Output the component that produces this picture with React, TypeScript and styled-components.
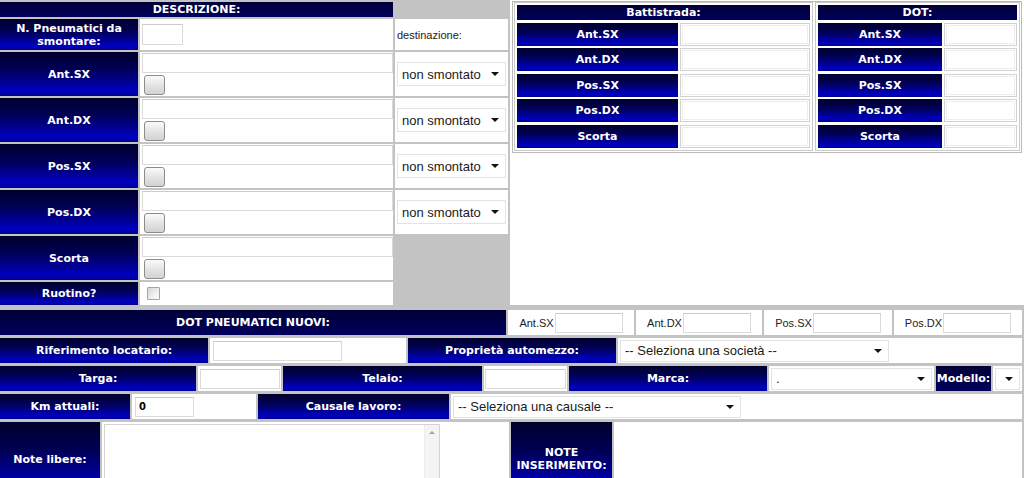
import styled, { createGlobalStyle } from 'styled-components';

const GlobalStyle = createGlobalStyle`
  html, body {
    margin: 0;
    padding: 0;
    background: #c3c3c3;
  }
  body {
    font-family: "DejaVu Sans", Verdana, sans-serif;
    overflow: hidden;
  }
`;

const Page = styled.div`
  width: 1024px;
  height: 478px;
  overflow: hidden;
  display: flex;
  flex-direction: column;
`;

/* ── top block ── */
const Top = styled.div`
  display: grid;
  grid-template-columns: 508px 1fr;
  column-gap: 2px;
  height: 305px;
`;

const LeftTable = styled.div`
  display: grid;
  grid-template-columns: 138px 253px 113px;
  grid-template-rows: 15px 31px repeat(5, 44px) 23px;
  gap: 2px;
  padding-top: 2px;
`;

const Label = styled.div<{ $span?: number; $flat?: boolean; $size?: number }>`
  grid-column: span ${p => p.$span ?? 1};
  display: flex;
  align-items: center;
  justify-content: center;
  text-align: center;
  padding: 0 4px;
  color: #fff;
  font-weight: bold;
  font-size: ${p => p.$size ?? 11}px;
  line-height: 13px;
  background: ${p =>
    p.$flat
      ? 'linear-gradient(to bottom, #000038, #00005c)'
      : 'linear-gradient(to bottom, #00002c 0%, #000058 40%, #0000a6 76%, #0000c2 88%, #00008e 100%)'};
  box-sizing: border-box;
  min-width: 0;
`;

const Blank = styled.div<{ $rows?: number }>`
  grid-row: span ${p => p.$rows ?? 1};
`;

const Cell = styled.div<{ $col?: boolean; $pad?: string; $center?: boolean }>`
  background: #fff;
  display: flex;
  flex-direction: ${p => (p.$col ? 'column' : 'row')};
  align-items: ${p => (p.$col ? 'flex-start' : 'center')};
  justify-content: ${p => (p.$center ? 'center' : 'flex-start')};
  padding: ${p => p.$pad ?? '0 2px'};
  box-sizing: border-box;
  min-width: 0;
  font-family: "Liberation Sans", Arial, sans-serif;
  font-size: 11px;
  color: #222;
`;

const TextInput = styled.input<{ $w?: string; $h?: number; $bold?: boolean }>`
  width: ${p => p.$w ?? '100%'};
  height: ${p => p.$h ?? 20}px;
  box-sizing: border-box;
  margin: 0;
  border: 1px solid #dadada;
  border-top-color: #cbcbcb;
  background: #fff;
  padding: 0 3px;
  font-family: "DejaVu Sans", Verdana, sans-serif;
  font-size: 10px;
  font-weight: ${p => (p.$bold ? 'bold' : 'normal')};
  color: #000;
  outline: none;
`;

const SmallButton = styled.button`
  width: 21px;
  height: 20px;
  margin: 2px 0 0 2px;
  padding: 0;
  border: 1px solid #8c8c8c;
  border-radius: 3px;
  background: linear-gradient(to bottom, #fbfbfb, #e4e4e4 50%, #d2d2d2);
`;

const Check = styled.input`
  appearance: none;
  -webkit-appearance: none;
  width: 13px;
  height: 13px;
  margin: 0 0 0 5px;
  border: 1px solid #a4a4a4;
  border-radius: 1px;
  background: linear-gradient(to bottom right, #d6d6d6, #f4f4f4 70%, #fff);
`;

const SelectWrap = styled.span<{ $w: number }>`
  position: relative;
  display: inline-block;
  width: ${p => p.$w}px;
  &::after {
    content: '';
    position: absolute;
    right: 7px;
    top: 50%;
    margin-top: -2px;
    border-left: 4px solid transparent;
    border-right: 4px solid transparent;
    border-top: 4px solid #111;
    pointer-events: none;
  }
`;

const NativeSelect = styled.select<{ $h?: number }>`
  appearance: none;
  -webkit-appearance: none;
  display: block;
  width: 100%;
  height: ${p => p.$h ?? 22}px;
  margin: 0;
  padding: 0 18px 0 4px;
  border: 1px solid #e3e3e3;
  border-radius: 0;
  background: #fff;
  font-family: "Liberation Sans", Arial, sans-serif;
  font-size: 13px;
  color: #1a1a1a;
  outline: none;
`;

function Select({ w, h, text }: { w: number; h?: number; text: string }) {
  return (
    <SelectWrap $w={w}>
      <NativeSelect $h={h} defaultValue={text}>
        <option value={text}>{text}</option>
      </NativeSelect>
    </SelectWrap>
  );
}

/* ── right top ── */
const RightPanel = styled.div`
  background: #fff;
  padding: 1px 0 0 2px;
`;

const OuterBox = styled.div`
  display: inline-flex;
  gap: 2px;
  padding: 0 1px 1px;
  border: 1px solid #b9b9b9;
`;

const SubTable = styled.div<{ $cols: string; $w: number }>`
  width: ${p => p.$w}px;
  box-sizing: border-box;
  border: 1px solid #c9c9c9;
  padding: 2px;
  display: grid;
  grid-template-columns: ${p => p.$cols};
  grid-template-rows: 15px repeat(5, 23px);
  column-gap: 2px;
  row-gap: 2.5px;
  & > :first-child {
    margin-bottom: 0.5px;
  }
`;

const BoxInput = styled.input`
  width: 100%;
  height: 100%;
  box-sizing: border-box;
  margin: 0;
  border: 1px solid #d2d2d2;
  box-shadow: inset 0 0 0 1px #fff, inset 0 0 0 2px #ececec;
  background: #fff;
  outline: none;
`;

/* ── bottom block ── */
const Bottom = styled.div`
  display: flex;
  flex-direction: column;
  gap: 3px;
  margin-top: 5px;
  padding-right: 2px;
`;

const Row = styled.div<{ $cols: string; $h?: number }>`
  display: grid;
  grid-template-columns: ${p => p.$cols};
  column-gap: 2px;
  height: ${p => p.$h ?? 25}px;
`;

const DotText = styled.span`
  font-family: "Liberation Sans", Arial, sans-serif;
  font-size: 11px;
  color: #222;
  margin-right: 1px;
`;

const NoteBox = styled.div`
  display: flex;
  width: 336px;
  height: 72px;
  box-sizing: border-box;
  border: 1px solid #d4d4d4;
  background: #fff;
`;

const NoteArea = styled.textarea`
  flex: 1;
  min-width: 0;
  margin: 0;
  border: none;
  resize: none;
  overflow: hidden;
  outline: none;
  background: #fff;
`;

const ScrollTrack = styled.div`
  width: 15px;
  background: #f4f4f4;
  border-left: 1px solid #ececec;
  display: flex;
  justify-content: center;
  padding-top: 6px;
  box-sizing: border-box;
`;

const ArrowUp = styled.span`
  width: 0;
  height: 0;
  border-left: 3px solid transparent;
  border-right: 3px solid transparent;
  border-bottom: 3px solid #a3a3a3;
`;

const tyres = ['Ant.SX', 'Ant.DX', 'Pos.SX', 'Pos.DX', 'Scorta'];

export default function App() {
  return (
    <Page>
      <GlobalStyle />
      <Top>
        <LeftTable>
          <Label $span={2} $flat>DESCRIZIONE:</Label>
          <Blank />

          <Label>N. Pneumatici da smontare:</Label>
          <Cell>
            <TextInput $w="41px" $h={21} />
          </Cell>
          <Cell>destinazione:</Cell>

          {tyres.map((t, i) => (
            <>
              <Label key={t + 'l'}>{t}</Label>
              <Cell key={t + 'c'} $col $pad="1px 0 0 2px">
                <TextInput />
                <SmallButton />
              </Cell>
              {i < 4 ? (
                <Cell key={t + 's'}>
                  <Select w={109} h={24} text="non smontato" />
                </Cell>
              ) : (
                <Blank key={t + 'b'} $rows={2} />
              )}
            </>
          ))}

          <Label>Ruotino?</Label>
          <Cell $pad="0 0 0 2px">
            <Check type="checkbox" />
          </Cell>
        </LeftTable>

        <RightPanel>
          <OuterBox>
            <SubTable $w={299} $cols="161px 1fr">
              <Label $span={2} $flat>Battistrada:</Label>
              {tyres.map(t => (
                <>
                  <Label key={t + 'b'}>{t}</Label>
                  <BoxInput key={t + 'i'} />
                </>
              ))}
            </SubTable>
            <SubTable $w={205} $cols="124px 1fr">
              <Label $span={2} $flat>DOT:</Label>
              {tyres.map(t => (
                <>
                  <Label key={t + 'd'}>{t}</Label>
                  <BoxInput key={t + 'j'} />
                </>
              ))}
            </SubTable>
          </OuterBox>
        </RightPanel>
      </Top>

      <Bottom>
        <Row $cols="506px 126px 126px 128px 1fr">
          <Label $flat>DOT PNEUMATICI NUOVI:</Label>
          {['Ant.SX', 'Ant.DX', 'Pos.SX', 'Pos.DX'].map(t => (
            <Cell key={t} $center>
              <DotText>{t}</DotText>
              <TextInput $w="68px" />
            </Cell>
          ))}
        </Row>

        <Row $cols="208px 196px 208px 1fr">
          <Label>Riferimento locatario:</Label>
          <Cell $pad="0 3px">
            <TextInput $w="129px" />
          </Cell>
          <Label>Proprietà automezzo:</Label>
          <Cell>
            <Select w={269} text="-- Seleziona una società --" />
          </Cell>
        </Row>

        <Row $cols="196px 83px 199px 83px 198px 165px 55px 1fr">
          <Label>Targa:</Label>
          <Cell>
            <TextInput $w="80px" />
          </Cell>
          <Label>Telaio:</Label>
          <Cell $pad="0 1px">
            <TextInput $w="81px" />
          </Cell>
          <Label>Marca:</Label>
          <Cell>
            <Select w={162} text="." />
          </Cell>
          <Label $flat $size={11}>Modello:</Label>
          <Cell>
            <Select w={26} text="" />
          </Cell>
        </Row>

        <Row $cols="130px 124px 191px 1fr">
          <Label>Km attuali:</Label>
          <Cell $pad="0 3px">
            <TextInput $w="59px" $bold defaultValue="0" />
          </Cell>
          <Label>Causale lavoro:</Label>
          <Cell>
            <Select w={288} text="-- Seleziona una causale --" />
          </Cell>
        </Row>

        <Row $cols="100px 407px 101px 1fr" $h={74}>
          <Label>Note libere:</Label>
          <Cell $col $pad="2px 2px 0">
            <NoteBox>
              <NoteArea />
              <ScrollTrack>
                <ArrowUp />
              </ScrollTrack>
            </NoteBox>
          </Cell>
          <Label>NOTE INSERIMENTO:</Label>
          <Cell />
        </Row>
      </Bottom>
    </Page>
  );
}
